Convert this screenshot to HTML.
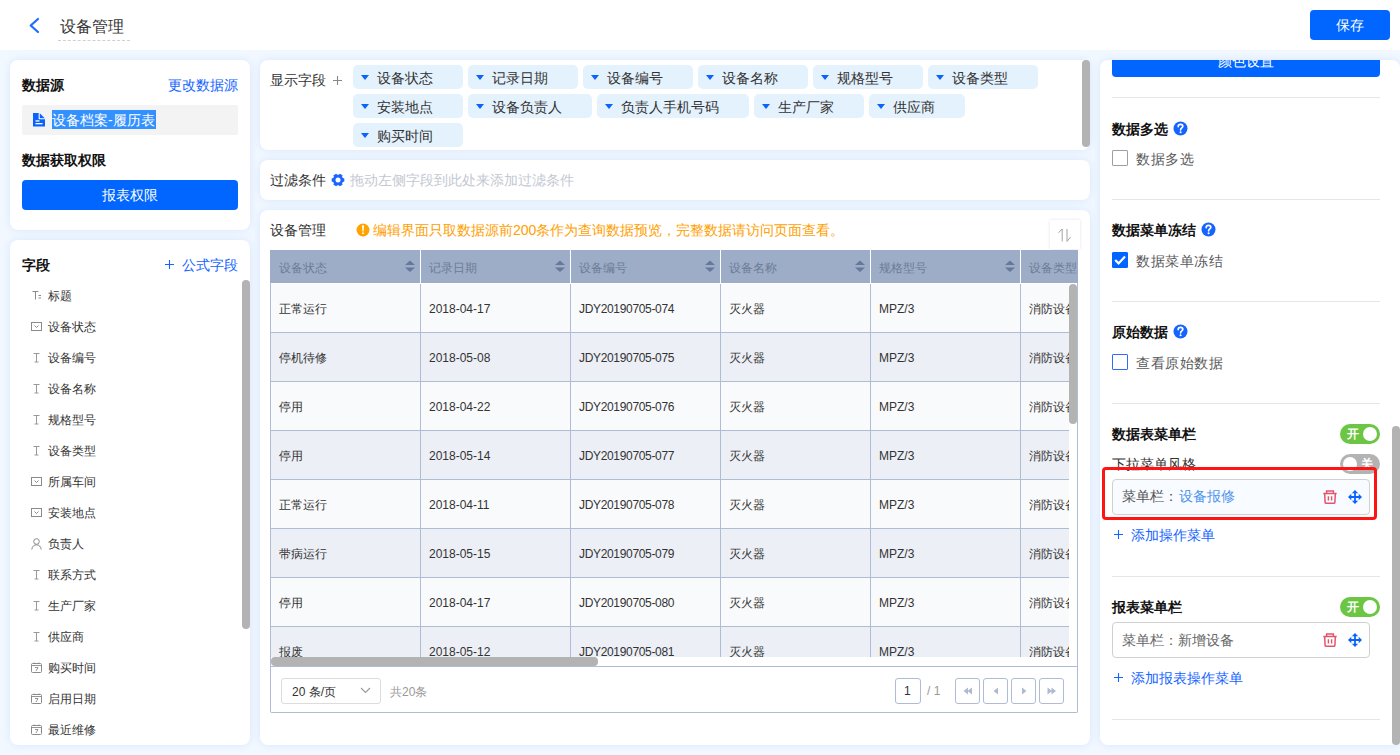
<!DOCTYPE html><html><head><meta charset="utf-8"><style>
*{box-sizing:border-box;margin:0;padding:0}
html,body{width:1400px;height:755px;overflow:hidden}
body{position:relative;font-family:"Liberation Sans",sans-serif;background:#f2f8ff;color:#333}
.a{position:absolute}
.panel{position:absolute;background:#fff;border-radius:8px;box-shadow:0 0 8px rgba(175,208,250,.4)}
.t{position:absolute;white-space:nowrap;line-height:20px}
.f14{font-size:14px}.f12{font-size:12px}
.b{font-weight:bold}
.btn{position:absolute;background:#0066ff;color:#fff;border-radius:4px;text-align:center;font-size:14px}
.sb{position:absolute;background:#b3b3b3;border-radius:4px}
.blue{color:#1464ff}
.chip{position:absolute;height:24px;background:#e4f2fe;border-radius:5px}
.chip svg{position:absolute;left:8px;top:10px}
.chip span{position:absolute;left:24px;top:3px;line-height:20px;font-size:14px;color:#333;white-space:nowrap}
.hd{position:absolute;top:250px;height:33px;background:#9dadc8}
.hd span{position:absolute;left:9px;top:7px;line-height:20px;font-size:12px;color:#6c7b95;white-space:nowrap}
.row{position:absolute;left:271px;width:798px;height:49px}
.cell{position:absolute;top:0;height:49px;line-height:20px;font-size:12px;color:#333;white-space:nowrap;padding-top:15px}
.div{position:absolute;height:1px;background:#e6e6e6;left:1112px;width:268px}
.cb{position:absolute;left:1112px;width:16px;height:16px;border:1.5px solid #9aa0a8;border-radius:1px;background:#fff}
.help{position:absolute;width:14px;height:14px;border-radius:50%;background:#1a66ff;color:#fff;font-size:11px;font-weight:bold;text-align:center;line-height:14px}
.tog{position:absolute;width:40px;height:20px;border-radius:10px}
.tog .k{position:absolute;top:3px;width:14px;height:14px;border-radius:50%;background:#fff}
.tog span{position:absolute;top:0;line-height:20px;font-size:12px;color:#fff;font-weight:bold}
.ib{position:absolute;left:1112px;width:258px;height:36px;border:1px solid #d0d0d0;border-radius:4px}
.pg{position:absolute;top:678px;width:26px;height:26px;border:1px solid #afbcd5;border-radius:3px;background:#fff}
</style></head><body>
<div class="a" style="left:0;top:0;width:1400px;height:50px;background:#fff"></div>
<svg class="a" style="left:27px;top:16px" width="14" height="19" viewBox="0 0 14 19"><path d="M11 3 L3.7 9.5 L11 16" fill="none" stroke="#1f6bff" stroke-width="2.2" stroke-linecap="round" stroke-linejoin="round"/></svg>
<div class="t" style="left:60px;top:17px;font-size:16px;color:#333">设备管理</div>
<div class="a" style="left:58px;top:40px;width:72px;height:0;border-top:1px dashed #d0d0d0"></div>
<div class="btn" style="left:1310px;top:10px;width:80px;height:30px;line-height:30px">保存</div>
<div class="panel" style="left:10px;top:60px;width:240px;height:170px"></div>
<div class="t f14 b" style="left:22px;top:75px;color:#111">数据源</div>
<div class="t f14 blue" style="left:168px;top:75px">更改数据源</div>
<div class="a" style="left:22px;top:105px;width:216px;height:30px;background:#f3f3f3;border-radius:2px"></div>
<svg class="a" style="left:33px;top:113px" width="12" height="14" viewBox="0 0 12 14"><path d="M0 0 H6.5 L12 5.5 V13.5 H0 Z" fill="#0a62ff"/><path d="M6.2 -0.5 V5.8 H12.5" fill="none" stroke="#fff" stroke-width="1.1"/><rect x="2.5" y="7.3" width="4" height="1.3" fill="#fff"/><rect x="2.5" y="10" width="7" height="1.3" fill="#fff"/></svg>
<div class="a" style="left:52px;top:110px;width:104px;height:19px;background:#3390ff"></div>
<div class="t f14" style="left:52px;top:110px;color:#fff">设备档案-履历表</div>
<div class="t f14 b" style="left:22px;top:150px;color:#111">数据获取权限</div>
<div class="btn" style="left:22px;top:180px;width:216px;height:30px;line-height:30px">报表权限</div>
<div class="panel" style="left:10px;top:240px;width:240px;height:505px"></div>
<div class="t f14 b" style="left:22px;top:255px;color:#111">字段</div>
<svg class="a" style="left:165px;top:260px" width="9" height="9" viewBox="0 0 9 9"><path d="M4.5 0V9M0 4.5H9" stroke="#1464ff" stroke-width="1.1"/></svg>
<div class="t f14 blue" style="left:182px;top:255px">公式字段</div>
<div class="sb" style="left:242px;top:280px;width:8px;height:349px"></div>
<svg class="a" style="left:31px;top:290px" width="11" height="11" viewBox="0 0 11 11"><path d="M1.5 1.5H7.5M4.5 1.5V9.5M7.5 5.5H10M7.5 8H10" stroke="#8a8a8a" stroke-width="1" fill="none"/></svg>
<div class="t f12" style="left:48px;top:286px;color:#333">标题</div>
<svg class="a" style="left:31px;top:321px" width="11" height="11" viewBox="0 0 11 11"><rect x="0.5" y="1.5" width="10" height="8" fill="none" stroke="#8a8a8a" stroke-width="1"/><path d="M3.5 4.5L5.5 6.5L7.5 4.5" stroke="#8a8a8a" stroke-width="1" fill="none"/></svg>
<div class="t f12" style="left:48px;top:317px;color:#333">设备状态</div>
<svg class="a" style="left:31px;top:352px" width="11" height="11" viewBox="0 0 11 11"><path d="M2.5 1.5H8.5M5.5 1.5V10M3.5 10H7.5" stroke="#999" stroke-width="1" fill="none"/></svg>
<div class="t f12" style="left:48px;top:348px;color:#333">设备编号</div>
<svg class="a" style="left:31px;top:383px" width="11" height="11" viewBox="0 0 11 11"><path d="M2.5 1.5H8.5M5.5 1.5V10M3.5 10H7.5" stroke="#999" stroke-width="1" fill="none"/></svg>
<div class="t f12" style="left:48px;top:379px;color:#333">设备名称</div>
<svg class="a" style="left:31px;top:414px" width="11" height="11" viewBox="0 0 11 11"><path d="M2.5 1.5H8.5M5.5 1.5V10M3.5 10H7.5" stroke="#999" stroke-width="1" fill="none"/></svg>
<div class="t f12" style="left:48px;top:410px;color:#333">规格型号</div>
<svg class="a" style="left:31px;top:445px" width="11" height="11" viewBox="0 0 11 11"><path d="M2.5 1.5H8.5M5.5 1.5V10M3.5 10H7.5" stroke="#999" stroke-width="1" fill="none"/></svg>
<div class="t f12" style="left:48px;top:441px;color:#333">设备类型</div>
<svg class="a" style="left:31px;top:476px" width="11" height="11" viewBox="0 0 11 11"><rect x="0.5" y="1.5" width="10" height="8" fill="none" stroke="#8a8a8a" stroke-width="1"/><path d="M3.5 4.5L5.5 6.5L7.5 4.5" stroke="#8a8a8a" stroke-width="1" fill="none"/></svg>
<div class="t f12" style="left:48px;top:472px;color:#333">所属车间</div>
<svg class="a" style="left:31px;top:507px" width="11" height="11" viewBox="0 0 11 11"><rect x="0.5" y="1.5" width="10" height="8" fill="none" stroke="#8a8a8a" stroke-width="1"/><path d="M3.5 4.5L5.5 6.5L7.5 4.5" stroke="#8a8a8a" stroke-width="1" fill="none"/></svg>
<div class="t f12" style="left:48px;top:503px;color:#333">安装地点</div>
<svg class="a" style="left:31px;top:538px" width="11" height="12" viewBox="0 0 11 12"><circle cx="5.5" cy="3.5" r="2.8" fill="none" stroke="#8a8a8a" stroke-width="1"/><path d="M0.8 11.5C1.2 8.3 3 6.8 5.5 6.8S9.8 8.3 10.2 11.5" fill="none" stroke="#8a8a8a" stroke-width="1"/></svg>
<div class="t f12" style="left:48px;top:534px;color:#333">负责人</div>
<svg class="a" style="left:31px;top:569px" width="11" height="11" viewBox="0 0 11 11"><path d="M2.5 1.5H8.5M5.5 1.5V10M3.5 10H7.5" stroke="#999" stroke-width="1" fill="none"/></svg>
<div class="t f12" style="left:48px;top:565px;color:#333">联系方式</div>
<svg class="a" style="left:31px;top:600px" width="11" height="11" viewBox="0 0 11 11"><path d="M2.5 1.5H8.5M5.5 1.5V10M3.5 10H7.5" stroke="#999" stroke-width="1" fill="none"/></svg>
<div class="t f12" style="left:48px;top:596px;color:#333">生产厂家</div>
<svg class="a" style="left:31px;top:631px" width="11" height="11" viewBox="0 0 11 11"><path d="M2.5 1.5H8.5M5.5 1.5V10M3.5 10H7.5" stroke="#999" stroke-width="1" fill="none"/></svg>
<div class="t f12" style="left:48px;top:627px;color:#333">供应商</div>
<svg class="a" style="left:31px;top:662px" width="11" height="11" viewBox="0 0 11 11"><rect x="0.5" y="1.5" width="10" height="9" rx="1" fill="none" stroke="#8a8a8a" stroke-width="1"/><path d="M0.5 3.5H10.5M3 0.5V2M8 0.5V2M4 5.5H7L5 9" stroke="#8a8a8a" stroke-width="0.9" fill="none"/></svg>
<div class="t f12" style="left:48px;top:658px;color:#333">购买时间</div>
<svg class="a" style="left:31px;top:693px" width="11" height="11" viewBox="0 0 11 11"><rect x="0.5" y="1.5" width="10" height="9" rx="1" fill="none" stroke="#8a8a8a" stroke-width="1"/><path d="M0.5 3.5H10.5M3 0.5V2M8 0.5V2M4 5.5H7L5 9" stroke="#8a8a8a" stroke-width="0.9" fill="none"/></svg>
<div class="t f12" style="left:48px;top:689px;color:#333">启用日期</div>
<svg class="a" style="left:31px;top:724px" width="11" height="11" viewBox="0 0 11 11"><rect x="0.5" y="1.5" width="10" height="9" rx="1" fill="none" stroke="#8a8a8a" stroke-width="1"/><path d="M0.5 3.5H10.5M3 0.5V2M8 0.5V2M4 5.5H7L5 9" stroke="#8a8a8a" stroke-width="0.9" fill="none"/></svg>
<div class="t f12" style="left:48px;top:720px;color:#333">最近维修</div>
<div class="panel" style="left:260px;top:60px;width:830px;height:90px"></div>
<div class="t f14" style="left:270px;top:70px;color:#333">显示字段</div>
<svg class="a" style="left:333px;top:76px" width="9" height="9" viewBox="0 0 9 9"><path d="M4.5 0V9M0 4.5H9" stroke="#888" stroke-width="1.1"/></svg>
<div class="chip" style="left:353px;top:65px;width:110px"><svg width="8" height="5" viewBox="0 0 8 5"><path d="M0 0H8L4 5Z" fill="#0a62ff"/></svg><span>设备状态</span></div>
<div class="chip" style="left:468px;top:65px;width:110px"><svg width="8" height="5" viewBox="0 0 8 5"><path d="M0 0H8L4 5Z" fill="#0a62ff"/></svg><span>记录日期</span></div>
<div class="chip" style="left:583px;top:65px;width:110px"><svg width="8" height="5" viewBox="0 0 8 5"><path d="M0 0H8L4 5Z" fill="#0a62ff"/></svg><span>设备编号</span></div>
<div class="chip" style="left:698px;top:65px;width:110px"><svg width="8" height="5" viewBox="0 0 8 5"><path d="M0 0H8L4 5Z" fill="#0a62ff"/></svg><span>设备名称</span></div>
<div class="chip" style="left:813px;top:65px;width:110px"><svg width="8" height="5" viewBox="0 0 8 5"><path d="M0 0H8L4 5Z" fill="#0a62ff"/></svg><span>规格型号</span></div>
<div class="chip" style="left:928px;top:65px;width:110px"><svg width="8" height="5" viewBox="0 0 8 5"><path d="M0 0H8L4 5Z" fill="#0a62ff"/></svg><span>设备类型</span></div>
<div class="chip" style="left:353px;top:94px;width:110px"><svg width="8" height="5" viewBox="0 0 8 5"><path d="M0 0H8L4 5Z" fill="#0a62ff"/></svg><span>安装地点</span></div>
<div class="chip" style="left:468px;top:94px;width:124px"><svg width="8" height="5" viewBox="0 0 8 5"><path d="M0 0H8L4 5Z" fill="#0a62ff"/></svg><span>设备负责人</span></div>
<div class="chip" style="left:597px;top:94px;width:152px"><svg width="8" height="5" viewBox="0 0 8 5"><path d="M0 0H8L4 5Z" fill="#0a62ff"/></svg><span>负责人手机号码</span></div>
<div class="chip" style="left:754px;top:94px;width:110px"><svg width="8" height="5" viewBox="0 0 8 5"><path d="M0 0H8L4 5Z" fill="#0a62ff"/></svg><span>生产厂家</span></div>
<div class="chip" style="left:869px;top:94px;width:96px"><svg width="8" height="5" viewBox="0 0 8 5"><path d="M0 0H8L4 5Z" fill="#0a62ff"/></svg><span>供应商</span></div>
<div class="chip" style="left:353px;top:123px;width:110px"><svg width="8" height="5" viewBox="0 0 8 5"><path d="M0 0H8L4 5Z" fill="#0a62ff"/></svg><span>购买时间</span></div>
<div class="sb" style="left:1082px;top:60px;width:8px;height:87px"></div>
<div class="panel" style="left:260px;top:160px;width:830px;height:40px"></div>
<div class="t f14" style="left:270px;top:170px;color:#333">过滤条件</div>
<svg class="a" style="left:331px;top:173px" width="14" height="14" viewBox="0 0 14 14"><path d="M13.31 5.43 L13.31 8.57 L11.82 8.95 L11.10 10.20 L11.52 11.68 L8.79 13.25 L7.72 12.15 L6.28 12.15 L5.21 13.25 L2.48 11.68 L2.90 10.20 L2.18 8.95 L0.69 8.57 L0.69 5.43 L2.18 5.05 L2.90 3.80 L2.48 2.32 L5.21 0.75 L6.28 1.85 L7.72 1.85 L8.79 0.75 L11.52 2.32 L11.10 3.80 L11.82 5.05Z" fill="#1a66ff"/><circle cx="7" cy="7" r="2.5" fill="#fff"/></svg>
<div class="t f14" style="left:350px;top:170px;color:#c3c8d2">拖动左侧字段到此处来添加过滤条件</div>
<div class="panel" style="left:260px;top:210px;width:830px;height:535px"></div>
<div class="t f14" style="left:270px;top:220px;color:#333">设备管理</div>
<svg class="a" style="left:356px;top:223px" width="14" height="14" viewBox="0 0 14 14"><circle cx="7" cy="7" r="6.5" fill="#ffa300"/><path d="M6 2.2 H8 L7.6 8.4 H6.4 Z" fill="#fff"/><rect x="6.2" y="9.4" width="1.6" height="1.6" fill="#fff"/></svg>
<div class="t f14" style="left:373px;top:220px;color:#ffa000">编辑界面只取数据源前200条作为查询数据预览，完整数据请访问页面查看。</div>
<div class="a" style="left:1050px;top:220px;width:30px;height:29px;background:#fff;box-shadow:0 0 3px rgba(0,0,0,.12)"></div>
<svg class="a" style="left:1057px;top:226px" width="16" height="18" viewBox="0 0 16 18"><path d="M1.5 6.8 L5.2 3 V15.4 M10 3 V15.4 L13.5 11" fill="none" stroke="#a3a3a3" stroke-width="1"/></svg>
<div class="a" style="left:270px;top:250px;width:808px;height:463px;border:1px solid #afbcd5;border-top:none;border-radius:0 0 2px 2px"></div>
<div class="a" style="left:270px;top:250px;width:808px;height:33px;background:#9dadc8;overflow:hidden">
<div class="t f12" style="left:9px;top:8px;color:#6c7b95">设备状态</div>
<svg class="a" style="left:135px;top:10px" width="10" height="13" viewBox="0 0 10 13"><path d="M0 5 L5 0.5 L10 5Z M0 7.5 L5 12 L10 7.5Z" fill="#66789a"/></svg>
<div class="a" style="left:150px;top:0;width:1px;height:33px;background:#fff"></div>
<div class="t f12" style="left:159px;top:8px;color:#6c7b95">记录日期</div>
<svg class="a" style="left:285px;top:10px" width="10" height="13" viewBox="0 0 10 13"><path d="M0 5 L5 0.5 L10 5Z M0 7.5 L5 12 L10 7.5Z" fill="#66789a"/></svg>
<div class="a" style="left:300px;top:0;width:1px;height:33px;background:#fff"></div>
<div class="t f12" style="left:309px;top:8px;color:#6c7b95">设备编号</div>
<svg class="a" style="left:435px;top:10px" width="10" height="13" viewBox="0 0 10 13"><path d="M0 5 L5 0.5 L10 5Z M0 7.5 L5 12 L10 7.5Z" fill="#66789a"/></svg>
<div class="a" style="left:450px;top:0;width:1px;height:33px;background:#fff"></div>
<div class="t f12" style="left:459px;top:8px;color:#6c7b95">设备名称</div>
<svg class="a" style="left:585px;top:10px" width="10" height="13" viewBox="0 0 10 13"><path d="M0 5 L5 0.5 L10 5Z M0 7.5 L5 12 L10 7.5Z" fill="#66789a"/></svg>
<div class="a" style="left:600px;top:0;width:1px;height:33px;background:#fff"></div>
<div class="t f12" style="left:609px;top:8px;color:#6c7b95">规格型号</div>
<svg class="a" style="left:735px;top:10px" width="10" height="13" viewBox="0 0 10 13"><path d="M0 5 L5 0.5 L10 5Z M0 7.5 L5 12 L10 7.5Z" fill="#66789a"/></svg>
<div class="a" style="left:750px;top:0;width:1px;height:33px;background:#fff"></div>
<div class="t f12" style="left:759px;top:8px;color:#6c7b95">设备类型</div>
</div>
<div class="a" style="left:271px;top:284px;width:798px;height:373px;overflow:hidden">
<div class="a" style="left:0;top:0px;width:798px;height:49px;background:#f9fafc;border-bottom:1px solid #afbcd5"></div>
<div class="t f12" style="left:8px;top:15px;color:#333">正常运行</div>
<div class="t f12" style="left:158px;top:15px;color:#333">2018-04-17</div>
<div class="t f12" style="left:308px;top:15px;color:#333;letter-spacing:-0.33px">JDY20190705-074</div>
<div class="t f12" style="left:458px;top:15px;color:#333">灭火器</div>
<div class="t f12" style="left:608px;top:15px;color:#333">MPZ/3</div>
<div class="t f12" style="left:758px;top:15px;color:#333">消防设备</div>
<div class="a" style="left:0;top:49px;width:798px;height:49px;background:#eceff6;border-bottom:1px solid #afbcd5"></div>
<div class="t f12" style="left:8px;top:64px;color:#333">停机待修</div>
<div class="t f12" style="left:158px;top:64px;color:#333">2018-05-08</div>
<div class="t f12" style="left:308px;top:64px;color:#333;letter-spacing:-0.33px">JDY20190705-075</div>
<div class="t f12" style="left:458px;top:64px;color:#333">灭火器</div>
<div class="t f12" style="left:608px;top:64px;color:#333">MPZ/3</div>
<div class="t f12" style="left:758px;top:64px;color:#333">消防设备</div>
<div class="a" style="left:0;top:98px;width:798px;height:49px;background:#f9fafc;border-bottom:1px solid #afbcd5"></div>
<div class="t f12" style="left:8px;top:113px;color:#333">停用</div>
<div class="t f12" style="left:158px;top:113px;color:#333">2018-04-22</div>
<div class="t f12" style="left:308px;top:113px;color:#333;letter-spacing:-0.33px">JDY20190705-076</div>
<div class="t f12" style="left:458px;top:113px;color:#333">灭火器</div>
<div class="t f12" style="left:608px;top:113px;color:#333">MPZ/3</div>
<div class="t f12" style="left:758px;top:113px;color:#333">消防设备</div>
<div class="a" style="left:0;top:147px;width:798px;height:49px;background:#eceff6;border-bottom:1px solid #afbcd5"></div>
<div class="t f12" style="left:8px;top:162px;color:#333">停用</div>
<div class="t f12" style="left:158px;top:162px;color:#333">2018-05-14</div>
<div class="t f12" style="left:308px;top:162px;color:#333;letter-spacing:-0.33px">JDY20190705-077</div>
<div class="t f12" style="left:458px;top:162px;color:#333">灭火器</div>
<div class="t f12" style="left:608px;top:162px;color:#333">MPZ/3</div>
<div class="t f12" style="left:758px;top:162px;color:#333">消防设备</div>
<div class="a" style="left:0;top:196px;width:798px;height:49px;background:#f9fafc;border-bottom:1px solid #afbcd5"></div>
<div class="t f12" style="left:8px;top:211px;color:#333">正常运行</div>
<div class="t f12" style="left:158px;top:211px;color:#333">2018-04-11</div>
<div class="t f12" style="left:308px;top:211px;color:#333;letter-spacing:-0.33px">JDY20190705-078</div>
<div class="t f12" style="left:458px;top:211px;color:#333">灭火器</div>
<div class="t f12" style="left:608px;top:211px;color:#333">MPZ/3</div>
<div class="t f12" style="left:758px;top:211px;color:#333">消防设备</div>
<div class="a" style="left:0;top:245px;width:798px;height:49px;background:#eceff6;border-bottom:1px solid #afbcd5"></div>
<div class="t f12" style="left:8px;top:260px;color:#333">带病运行</div>
<div class="t f12" style="left:158px;top:260px;color:#333">2018-05-15</div>
<div class="t f12" style="left:308px;top:260px;color:#333;letter-spacing:-0.33px">JDY20190705-079</div>
<div class="t f12" style="left:458px;top:260px;color:#333">灭火器</div>
<div class="t f12" style="left:608px;top:260px;color:#333">MPZ/3</div>
<div class="t f12" style="left:758px;top:260px;color:#333">消防设备</div>
<div class="a" style="left:0;top:294px;width:798px;height:49px;background:#f9fafc;border-bottom:1px solid #afbcd5"></div>
<div class="t f12" style="left:8px;top:309px;color:#333">停用</div>
<div class="t f12" style="left:158px;top:309px;color:#333">2018-04-17</div>
<div class="t f12" style="left:308px;top:309px;color:#333;letter-spacing:-0.33px">JDY20190705-080</div>
<div class="t f12" style="left:458px;top:309px;color:#333">灭火器</div>
<div class="t f12" style="left:608px;top:309px;color:#333">MPZ/3</div>
<div class="t f12" style="left:758px;top:309px;color:#333">消防设备</div>
<div class="a" style="left:0;top:343px;width:798px;height:49px;background:#eceff6;border-bottom:1px solid #afbcd5"></div>
<div class="t f12" style="left:8px;top:358px;color:#333">报废</div>
<div class="t f12" style="left:158px;top:358px;color:#333">2018-05-12</div>
<div class="t f12" style="left:308px;top:358px;color:#333;letter-spacing:-0.33px">JDY20190705-081</div>
<div class="t f12" style="left:458px;top:358px;color:#333">灭火器</div>
<div class="t f12" style="left:608px;top:358px;color:#333">MPZ/3</div>
<div class="t f12" style="left:758px;top:358px;color:#333">消防设备</div>
<div class="a" style="left:149px;top:0;width:1px;height:373px;background:#afbcd5"></div>
<div class="a" style="left:299px;top:0;width:1px;height:373px;background:#afbcd5"></div>
<div class="a" style="left:449px;top:0;width:1px;height:373px;background:#afbcd5"></div>
<div class="a" style="left:599px;top:0;width:1px;height:373px;background:#afbcd5"></div>
<div class="a" style="left:749px;top:0;width:1px;height:373px;background:#afbcd5"></div>
</div>
<div class="sb" style="left:1069px;top:284px;width:8px;height:140px"></div>
<div class="a" style="left:271px;top:657px;width:806px;height:9px;background:#fff"></div>
<div class="sb" style="left:271px;top:657px;width:327px;height:9px"></div>
<div class="a" style="left:270px;top:666px;width:808px;height:1px;background:#afbcd5"></div>
<div class="a" style="left:281px;top:678px;width:100px;height:26px;border:1px solid #dcdcdc;border-radius:3px;background:#fff"></div>
<div class="t f12" style="left:292px;top:682px;color:#333">20 条/页</div>
<svg class="a" style="left:360px;top:687px" width="11" height="7" viewBox="0 0 11 7"><path d="M1 1 L5.5 5.5 L10 1" fill="none" stroke="#999" stroke-width="1.1"/></svg>
<div class="t f12" style="left:390px;top:682px;color:#999">共20条</div>
<div class="pg" style="left:895px"></div>
<div class="t f12" style="left:904px;top:681px;color:#333">1</div>
<div class="t f12" style="left:927px;top:681px;color:#999">/ 1</div>
<div class="pg" style="left:955px;width:25px"></div>
<svg class="a" style="left:963px;top:687px" width="10" height="8" viewBox="0 0 10 8"><path d="M5 0.5 L0.5 4 L5 7.5Z M9 0.5 L4.5 4 L9 7.5Z" fill="#aebad0"/></svg>
<div class="pg" style="left:983px;width:25px"></div>
<svg class="a" style="left:991px;top:687px" width="10" height="8" viewBox="0 0 10 8"><path d="M7 0.5 L2.5 4 L7 7.5Z" fill="#aebad0"/></svg>
<div class="pg" style="left:1011px;width:25px"></div>
<svg class="a" style="left:1019px;top:687px" width="10" height="8" viewBox="0 0 10 8"><path d="M3 0.5 L7.5 4 L3 7.5Z" fill="#aebad0"/></svg>
<div class="pg" style="left:1039px;width:25px"></div>
<svg class="a" style="left:1047px;top:687px" width="10" height="8" viewBox="0 0 10 8"><path d="M0.5 0.5 L5 4 L0.5 7.5Z M4.5 0.5 L9 4 L4.5 7.5Z" fill="#aebad0"/></svg>
<div class="panel" style="left:1100px;top:60px;width:300px;height:685px;overflow:hidden">
<div class="btn" style="left:12px;top:-13px;width:268px;height:30px;line-height:29px">颜色设置</div>
</div>
<div class="div" style="top:97px"></div>
<div class="div" style="top:199px"></div>
<div class="div" style="top:301px"></div>
<div class="div" style="top:403px"></div>
<div class="div" style="top:576px"></div>
<div class="div" style="top:719px"></div>
<div class="t f14 b" style="left:1112px;top:119px;color:#111">数据多选</div>
<svg class="a" style="left:1173px;top:121px" width="15" height="15" viewBox="0 0 15 15"><circle cx="7.5" cy="7.5" r="7" fill="#1464ff"/><path d="M5.2 5.6 C5.2 4.2 6.2 3.4 7.5 3.4 C8.9 3.4 9.8 4.3 9.8 5.4 C9.8 6.9 7.6 7 7.6 8.8" fill="none" stroke="#fff" stroke-width="1.7" stroke-linecap="round"/><circle cx="7.6" cy="11.2" r="1.05" fill="#fff"/></svg>
<div class="cb" style="top:150px;border-color:#9aa0a8"></div>
<div class="t f14" style="left:1136px;top:149px;color:#5a5a5a;letter-spacing:0.6px">数据多选</div>
<div class="t f14 b" style="left:1112px;top:220px;color:#111">数据菜单冻结</div>
<svg class="a" style="left:1201px;top:222px" width="15" height="15" viewBox="0 0 15 15"><circle cx="7.5" cy="7.5" r="7" fill="#1464ff"/><path d="M5.2 5.6 C5.2 4.2 6.2 3.4 7.5 3.4 C8.9 3.4 9.8 4.3 9.8 5.4 C9.8 6.9 7.6 7 7.6 8.8" fill="none" stroke="#fff" stroke-width="1.7" stroke-linecap="round"/><circle cx="7.6" cy="11.2" r="1.05" fill="#fff"/></svg>
<div class="cb" style="top:252px;background:#0066ff;border-color:#0066ff"></div>
<svg class="a" style="left:1112px;top:252px" width="16" height="16" viewBox="0 0 16 16"><path d="M3.2 8 L6.6 11.4 L13 4.6" fill="none" stroke="#fff" stroke-width="2.2"/></svg>
<div class="t f14" style="left:1136px;top:251px;color:#5a5a5a;letter-spacing:0.6px">数据菜单冻结</div>
<div class="t f14 b" style="left:1112px;top:322px;color:#111">原始数据</div>
<svg class="a" style="left:1173px;top:324px" width="15" height="15" viewBox="0 0 15 15"><circle cx="7.5" cy="7.5" r="7" fill="#1464ff"/><path d="M5.2 5.6 C5.2 4.2 6.2 3.4 7.5 3.4 C8.9 3.4 9.8 4.3 9.8 5.4 C9.8 6.9 7.6 7 7.6 8.8" fill="none" stroke="#fff" stroke-width="1.7" stroke-linecap="round"/><circle cx="7.6" cy="11.2" r="1.05" fill="#fff"/></svg>
<div class="cb" style="top:354px;border-color:#2f6bff"></div>
<div class="t f14" style="left:1136px;top:353px;color:#5a5a5a;letter-spacing:0.6px">查看原始数据</div>
<div class="t f14 b" style="left:1112px;top:424px;color:#111">数据表菜单栏</div>
<div class="tog" style="left:1340px;top:424px;background:#6cc644"><span style="left:7px">开</span><div class="k" style="left:23px"></div></div>
<div class="t f14" style="left:1112px;top:454px;color:#333">下拉菜单风格</div>
<div class="tog" style="left:1340px;top:454px;background:#b3b3b3"><div class="k" style="left:3px"></div><span style="left:21px">关</span></div>
<div class="a" style="left:1102px;top:467px;width:275px;height:53px;border:3px solid #ff1414;border-radius:4px"></div>
<div class="ib" style="top:479px;background:#f8fbff"></div>
<div class="t f14" style="left:1122px;top:486px;color:#555">菜单栏：</div>
<div class="t f14" style="left:1179px;top:486px;color:#4f94ea">设备报修</div>
<svg class="a" style="left:1323px;top:490px" width="14" height="14" viewBox="0 0 14 14"><path d="M0.3 3.6H13.7M3.6 3.6V1H10.4V3.6" fill="none" stroke="#e2556a" stroke-width="1.5"/><path d="M1.7 4 L2.1 12.3 Q2.2 13.2 3.1 13.2 H10.9 Q11.8 13.2 11.9 12.3 L12.3 4" fill="none" stroke="#e2556a" stroke-width="1.5"/><path d="M5.4 6.3V10.5M8.6 6.3V10.5" stroke="#e2556a" stroke-width="1.4"/></svg>
<svg class="a" style="left:1348px;top:490px" width="14" height="14" viewBox="0 0 14 14"><path d="M7 2V12M2 7H12" stroke="#0a62ff" stroke-width="1.8"/><path d="M7 0L10.2 3.3H3.8Z M7 14L10.2 10.7H3.8Z M0 7L3.3 3.8V10.2Z M14 7L10.7 3.8V10.2Z" fill="#0a62ff"/></svg>
<svg class="a" style="left:1114px;top:530px" width="9" height="9" viewBox="0 0 9 9"><path d="M4.5 0V9M0 4.5H9" stroke="#1464ff" stroke-width="1.1"/></svg>
<div class="t f14 blue" style="left:1131px;top:525px">添加操作菜单</div>
<div class="t f14 b" style="left:1112px;top:597px;color:#111">报表菜单栏</div>
<div class="tog" style="left:1340px;top:597px;background:#6cc644"><span style="left:7px">开</span><div class="k" style="left:23px"></div></div>
<div class="ib" style="top:622px;background:#fff"></div>
<div class="t f14" style="left:1122px;top:630px;color:#666">菜单栏：新增设备</div>
<svg class="a" style="left:1323px;top:633px" width="14" height="14" viewBox="0 0 14 14"><path d="M0.3 3.6H13.7M3.6 3.6V1H10.4V3.6" fill="none" stroke="#e2556a" stroke-width="1.5"/><path d="M1.7 4 L2.1 12.3 Q2.2 13.2 3.1 13.2 H10.9 Q11.8 13.2 11.9 12.3 L12.3 4" fill="none" stroke="#e2556a" stroke-width="1.5"/><path d="M5.4 6.3V10.5M8.6 6.3V10.5" stroke="#e2556a" stroke-width="1.4"/></svg>
<svg class="a" style="left:1348px;top:633px" width="14" height="14" viewBox="0 0 14 14"><path d="M7 2V12M2 7H12" stroke="#0a62ff" stroke-width="1.8"/><path d="M7 0L10.2 3.3H3.8Z M7 14L10.2 10.7H3.8Z M0 7L3.3 3.8V10.2Z M14 7L10.7 3.8V10.2Z" fill="#0a62ff"/></svg>
<svg class="a" style="left:1114px;top:673px" width="9" height="9" viewBox="0 0 9 9"><path d="M4.5 0V9M0 4.5H9" stroke="#1464ff" stroke-width="1.1"/></svg>
<div class="t f14 blue" style="left:1131px;top:668px">添加报表操作菜单</div>
<div class="sb" style="left:1392px;top:426px;width:8px;height:319px"></div>
</body></html>
